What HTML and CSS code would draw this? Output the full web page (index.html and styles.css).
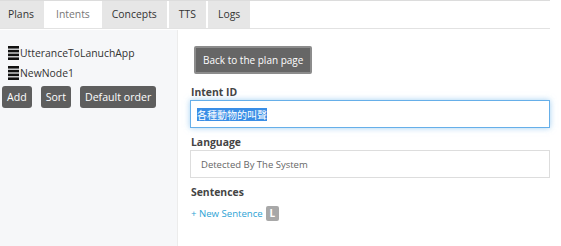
FILE: index.html
```html
<!DOCTYPE html>
<html lang="en">
<head>
  <meta charset="UTF-8" />
  <title>Intents</title>
  <link rel="stylesheet" href="styles.css">
</head>
<body>
  <div class="app">
    <div class="tabs">
      <div class="tab">Plans</div>
      <div class="tab active">Intents</div>
      <div class="tab">Concepts</div>
      <div class="tab">TTS</div>
      <div class="tab">Logs</div>
    </div>

    <div class="main">
      <div class="sidebar">
        <ul class="node-list">
          <li>
            <svg class="handle" width="11" height="14" viewBox="0 0 11 14"><rect y="0" width="11" height="2.6"/><rect y="3.8" width="11" height="2.6"/><rect y="7.6" width="11" height="2.6"/><rect y="11.4" width="11" height="2.6"/></svg>
            UtteranceToLanuchApp
          </li>
          <li>
            <svg class="handle" width="11" height="14" viewBox="0 0 11 14"><rect y="0" width="11" height="2.6"/><rect y="3.8" width="11" height="2.6"/><rect y="7.6" width="11" height="2.6"/><rect y="11.4" width="11" height="2.6"/></svg>
            NewNode1
          </li>
        </ul>
        <div class="btn-row">
          <button class="btn">Add</button>
          <button class="btn">Sort</button>
          <button class="btn">Default order</button>
        </div>
      </div>

      <div class="content">
        <button class="back-btn">Back to the plan page</button>

        <label class="field-label first">Intent ID</label>
        <div class="input focused"><span class="selected">各種動物的叫聲</span></div>

        <label class="field-label">Language</label>
        <div class="input select">Detected By The System</div>

        <label class="field-label">Sentences</label>
        <div class="sentence-row">
          <a class="new-link">+ New Sentence</a>
          <span class="badge">L</span>
        </div>
      </div>
    </div>
  </div>
</body>
</html>
```

FILE: styles.css
```css
body {
  margin: 0;
  font-family: 'Open Sans', sans-serif;
  color: #333;
  background: #fff;
}

.app {
  width: 550px;
}

.tabs {
  display: flex;
  gap: 2px;
  height: 27px;
  border-top: 1px solid #dcdcdc;
  border-bottom: 1px solid #e2e2e2;
}

.tab {
  background: #e6e6e6;
  padding: 0 10px;
  line-height: 27px;
  font-size: 10.4px;
  color: #333;
}

.tab:first-child {
  padding-left: 8px;
}

.tab.active {
  background: #fff;
  color: #777;
}

.main {
  display: flex;
  height: 217px;
  margin-top: 1px;
}

.sidebar {
  width: 177px;
  background: #f6f7f9;
  border-right: 1px solid #ececec;
  padding-top: 13px;
}

.node-list {
  list-style: none;
  margin: 0;
  padding: 0 0 0 8px;
}

.node-list li {
  display: flex;
  align-items: center;
  height: 20px;
  font-size: 10.4px;
  color: #333;
}

.handle {
  fill: #111;
  margin-right: 1px;
}

.btn-row {
  display: flex;
  gap: 9px;
  padding-left: 2px;
  margin-top: 3px;
}

.btn {
  height: 22px;
  padding: 0 5px;
  border: none;
  border-radius: 3px;
  background: #5e5e5e;
  color: #fff;
  font-family: 'Open Sans', sans-serif;
  font-size: 10.6px;
}

.content {
  flex: 1;
  padding-left: 12px;
  padding-top: 16px;
}

.back-btn {
  display: block;
  margin-left: 4px;
  height: 28px;
  padding: 0 7px;
  background: #666;
  border: 2px solid #8c8c8c;
  border-radius: 2px;
  color: #fff;
  font-family: 'Open Sans', sans-serif;
  font-size: 10px;
}

.field-label {
  display: block;
  font-weight: bold;
  font-size: 10.4px;
  line-height: 14px;
  color: #444;
  margin-top: 7px;
  margin-bottom: 1px;
  padding-left: 1px;
}

.field-label.first {
  margin-top: 11px;
}

.input {
  height: 26px;
  border: 1px solid #ddd;
  display: flex;
  align-items: center;
  padding-left: 6px;
  font-size: 9.5px;
  color: #666;
}

.input.focused {
  border-color: #66afe9;
  box-shadow: 0 0 6px rgba(102, 175, 233, 0.6);
  font-family: 'Noto Sans CJK TC', sans-serif;
  font-size: 10px;
}

.selected {
  background: #3a8ee6;
  color: #fff;
  line-height: 13px;
}

.input.select {
  padding-left: 10px;
}

.sentence-row {
  display: flex;
  align-items: center;
  gap: 3px;
  margin-top: 7px;
  padding-left: 1px;
}

.new-link {
  color: #2ea3d5;
  font-size: 9.6px;
}

.badge {
  background: #a8a8a8;
  color: #fff;
  font-size: 10px;
  font-weight: bold;
  width: 13px;
  height: 15px;
  line-height: 15px;
  text-align: center;
  border-radius: 2px;
}
```
